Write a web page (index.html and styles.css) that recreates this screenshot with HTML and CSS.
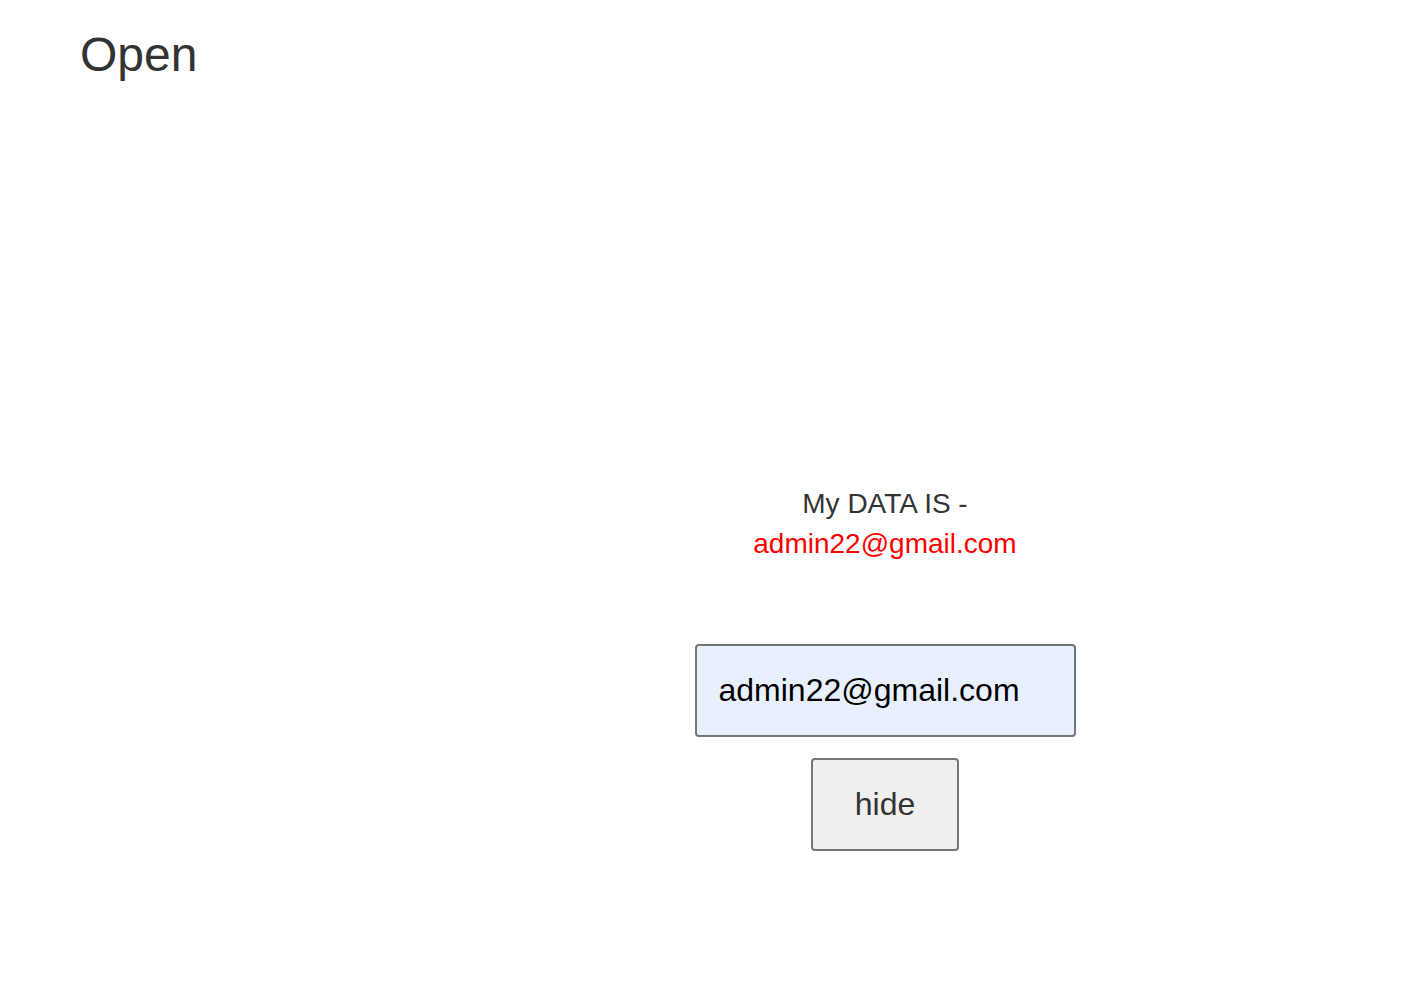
FILE: index.html
```html
<!DOCTYPE html>
<html lang="en">
<head>
    <meta charset="UTF-8">
    <meta name="viewport" content="width=device-width, initial-scale=1.0">
    <title>Open</title>
    <link rel="stylesheet" href="styles.css">
</head>
<body>
    <h1 class="title">Open</h1>

    <div class="panel">
        <div class="data">
            <div class="data-label">My DATA IS -</div>
            <div class="data-value">admin22@gmail.com</div>
        </div>
        <input type="text" class="field" value="admin22@gmail.com">
        <button class="button-hide">hide</button>
    </div>
</body>
</html>
```

FILE: styles.css
```css
body {
    font-family: "Liberation Sans", Arial, sans-serif;
    background-color: #ffffff;
    color: #333333;
    margin: 0;
}

.title {
    margin: 27px 0 0 80px;
    font-size: 48px;
    line-height: 56px;
    font-weight: normal;
}

.panel {
    margin-left: 342px;
    padding-top: 401px;
    display: flex;
    flex-direction: column;
    align-items: center;
}

.data {
    text-align: center;
    font-size: 28px;
    line-height: 40px;
    margin-bottom: 80px;
}

.data-value {
    color: #ff0000;
}

.field {
    box-sizing: border-box;
    width: 381px;
    height: 93px;
    padding: 0 22px;
    font-family: "Liberation Sans", Arial, sans-serif;
    font-size: 32px;
    color: #000000;
    background-color: #e8f0fe;
    border: 2px solid #767676;
    border-radius: 4px;
    margin: 0 0 21px 0;
}

.button-hide {
    box-sizing: border-box;
    width: 148px;
    height: 93px;
    font-family: "Liberation Sans", Arial, sans-serif;
    font-size: 32px;
    color: #333333;
    background-color: #efefef;
    border: 2px solid #767676;
    border-radius: 4px;
    cursor: pointer;
}
```
